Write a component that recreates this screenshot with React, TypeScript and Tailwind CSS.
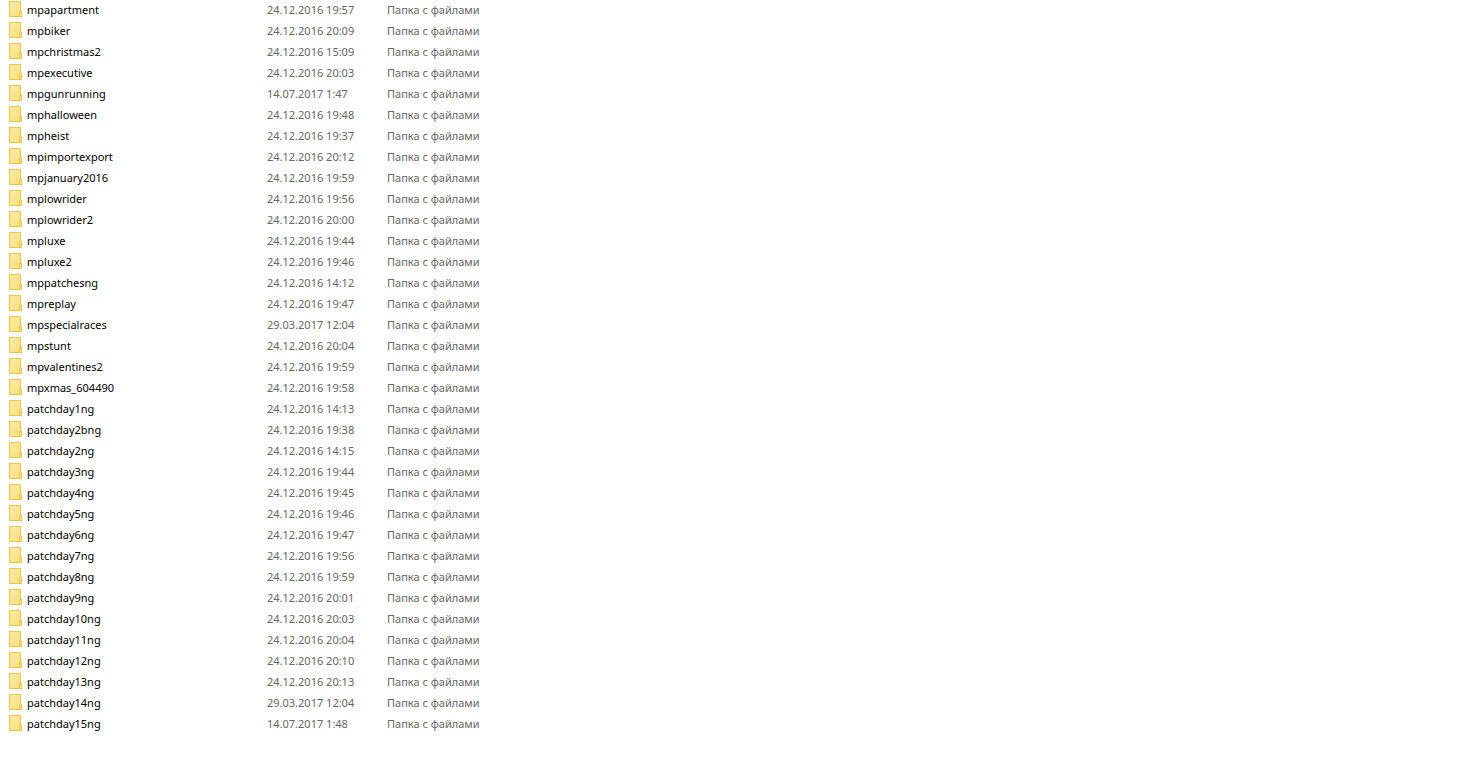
type FolderEntry = { name: string; modified: string };

const folders: FolderEntry[] = [
  { name: "mpapartment", modified: "24.12.2016 19:57" },
  { name: "mpbiker", modified: "24.12.2016 20:09" },
  { name: "mpchristmas2", modified: "24.12.2016 15:09" },
  { name: "mpexecutive", modified: "24.12.2016 20:03" },
  { name: "mpgunrunning", modified: "14.07.2017 1:47" },
  { name: "mphalloween", modified: "24.12.2016 19:48" },
  { name: "mpheist", modified: "24.12.2016 19:37" },
  { name: "mpimportexport", modified: "24.12.2016 20:12" },
  { name: "mpjanuary2016", modified: "24.12.2016 19:59" },
  { name: "mplowrider", modified: "24.12.2016 19:56" },
  { name: "mplowrider2", modified: "24.12.2016 20:00" },
  { name: "mpluxe", modified: "24.12.2016 19:44" },
  { name: "mpluxe2", modified: "24.12.2016 19:46" },
  { name: "mppatchesng", modified: "24.12.2016 14:12" },
  { name: "mpreplay", modified: "24.12.2016 19:47" },
  { name: "mpspecialraces", modified: "29.03.2017 12:04" },
  { name: "mpstunt", modified: "24.12.2016 20:04" },
  { name: "mpvalentines2", modified: "24.12.2016 19:59" },
  { name: "mpxmas_604490", modified: "24.12.2016 19:58" },
  { name: "patchday1ng", modified: "24.12.2016 14:13" },
  { name: "patchday2bng", modified: "24.12.2016 19:38" },
  { name: "patchday2ng", modified: "24.12.2016 14:15" },
  { name: "patchday3ng", modified: "24.12.2016 19:44" },
  { name: "patchday4ng", modified: "24.12.2016 19:45" },
  { name: "patchday5ng", modified: "24.12.2016 19:46" },
  { name: "patchday6ng", modified: "24.12.2016 19:47" },
  { name: "patchday7ng", modified: "24.12.2016 19:56" },
  { name: "patchday8ng", modified: "24.12.2016 19:59" },
  { name: "patchday9ng", modified: "24.12.2016 20:01" },
  { name: "patchday10ng", modified: "24.12.2016 20:03" },
  { name: "patchday11ng", modified: "24.12.2016 20:04" },
  { name: "patchday12ng", modified: "24.12.2016 20:10" },
  { name: "patchday13ng", modified: "24.12.2016 20:13" },
  { name: "patchday14ng", modified: "29.03.2017 12:04" },
  { name: "patchday15ng", modified: "14.07.2017 1:48" },
];

function FolderGradient() {
  return (
    <svg width="0" height="0" className="absolute" aria-hidden="true">
      <defs>
        <linearGradient id="folder-fill" x1="0" y1="0" x2="1" y2="1">
          <stop offset="0" stopColor="#ffeba3" />
          <stop offset="1" stopColor="#ffde7c" />
        </linearGradient>
      </defs>
    </svg>
  );
}

function FolderIcon() {
  return (
    <svg width="13" height="16" viewBox="0 0 13 16" className="shrink-0" aria-hidden="true">
      <path d="M.5.5h11v9.5h1v5.5H.5z" fill="url(#folder-fill)" stroke="#eac54f" />
      <path d="M10.5 15.5V10.5h2v5z" fill="#ffe48f" stroke="#eac54f" />
    </svg>
  );
}

export default function App() {
  return (
    <main className="min-h-screen bg-white font-['Noto_Sans','Open_Sans',sans-serif]">
      <FolderGradient />
      <table className="w-full table-fixed border-collapse text-left">
        <colgroup>
          <col className="w-[267px]" />
          <col className="w-[120px]" />
          <col />
        </colgroup>
        <tbody>
          {folders.map((folder) => (
            <tr key={folder.name} className="h-[21px] align-top text-[11px] leading-5 whitespace-nowrap text-[#666666]">
              <th scope="row" className="p-0 font-normal text-black">
                <span className="flex items-start gap-[5px] pl-[9px]">
                  <span className="pt-px">
                    <FolderIcon />
                  </span>
                  {folder.name}
                </span>
              </th>
              <td className="p-0">{folder.modified}</td>
              <td className="p-0">Папка с файлами</td>
            </tr>
          ))}
        </tbody>
      </table>
    </main>
  );
}
